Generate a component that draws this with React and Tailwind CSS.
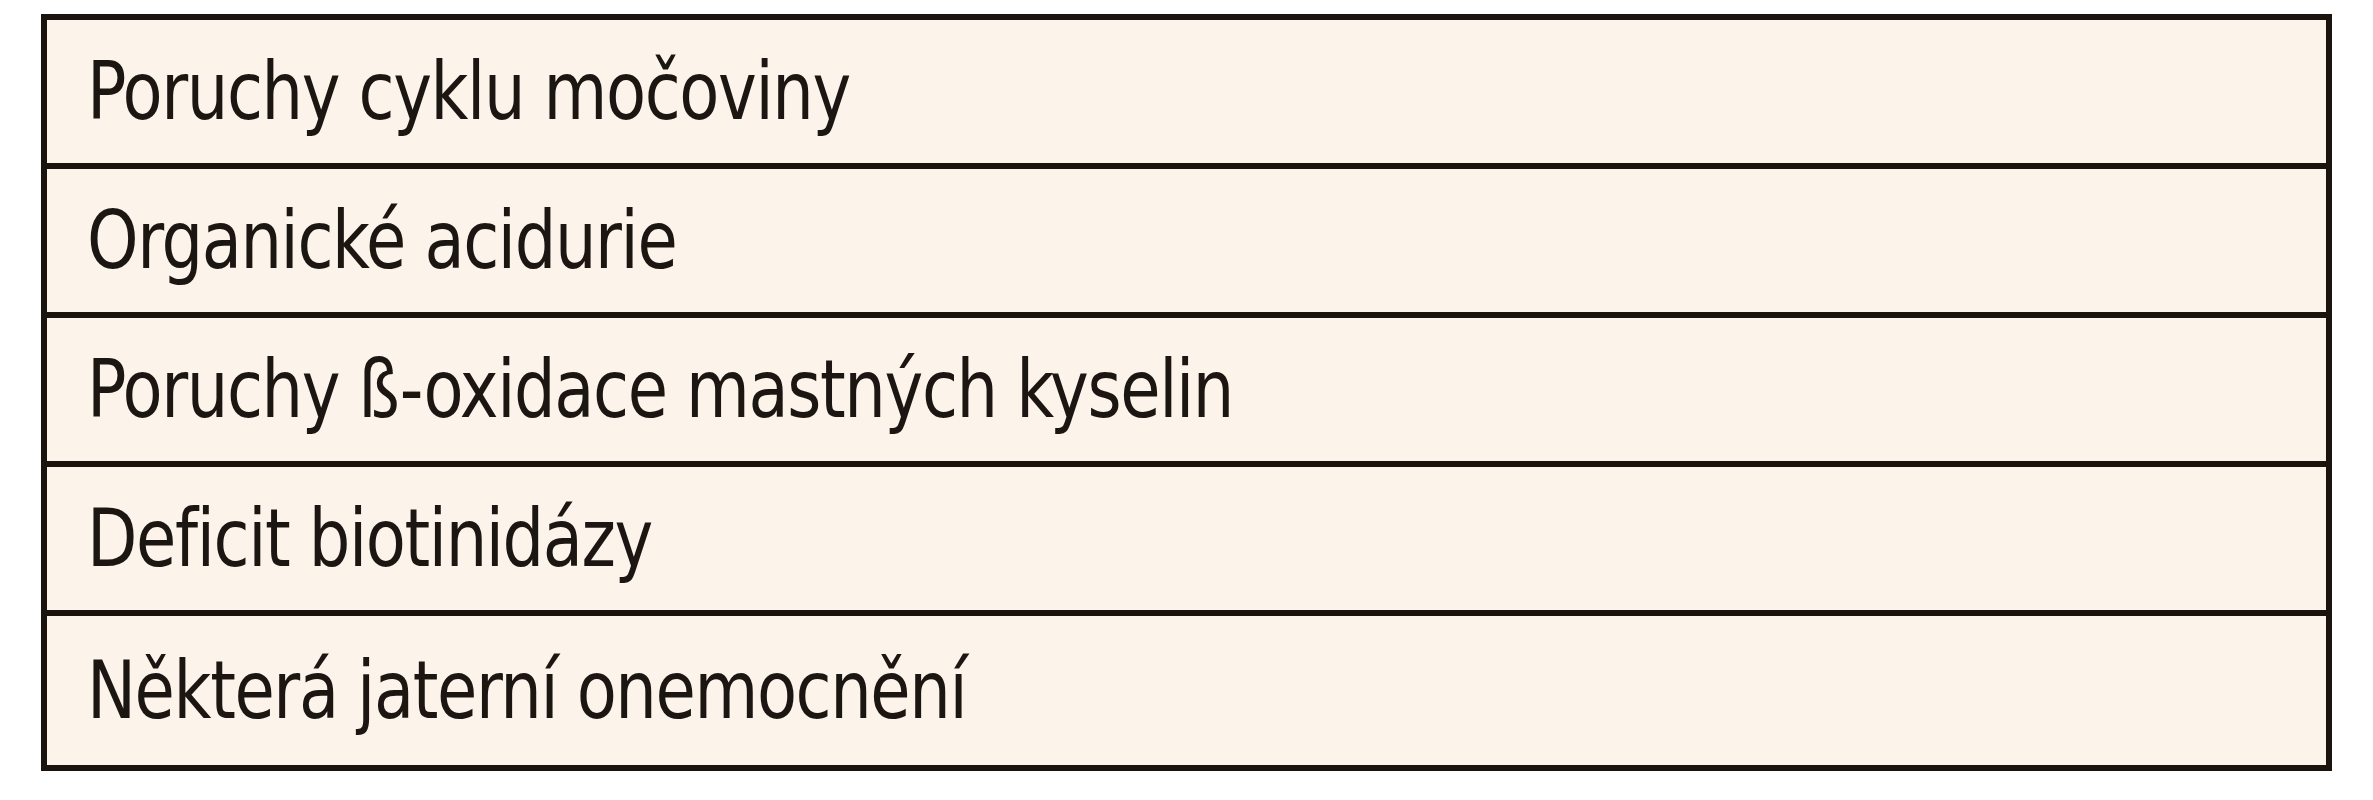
const rows = [
  "Poruchy cyklu močoviny",
  "Organické acidurie",
  "Poruchy ß-oxidace mastných kyselin",
  "Deficit biotinidázy",
  "Některá jaterní onemocnění",
];

export default function App() {
  return (
    <div className="w-[2373px] h-[800px] bg-white pt-[14px] pl-[41px]">
      <div className="w-[2291px] border-[6px] border-[#1a130e] bg-[#fcf3eb] divide-y-[6px] divide-[#1a130e]">
        {rows.map((row) => (
          <div
            key={row}
            className="h-[149px] flex items-center pl-[40px] font-['DejaVu_Sans_Condensed','DejaVu_Sans',sans-serif] [font-stretch:condensed] text-[80px] leading-none text-[#1c1612]"
          >
            <span className="tracking-[-1.5px] scale-x-[0.91] origin-left whitespace-nowrap">
              {row}
            </span>
          </div>
        ))}
      </div>
    </div>
  );
}
